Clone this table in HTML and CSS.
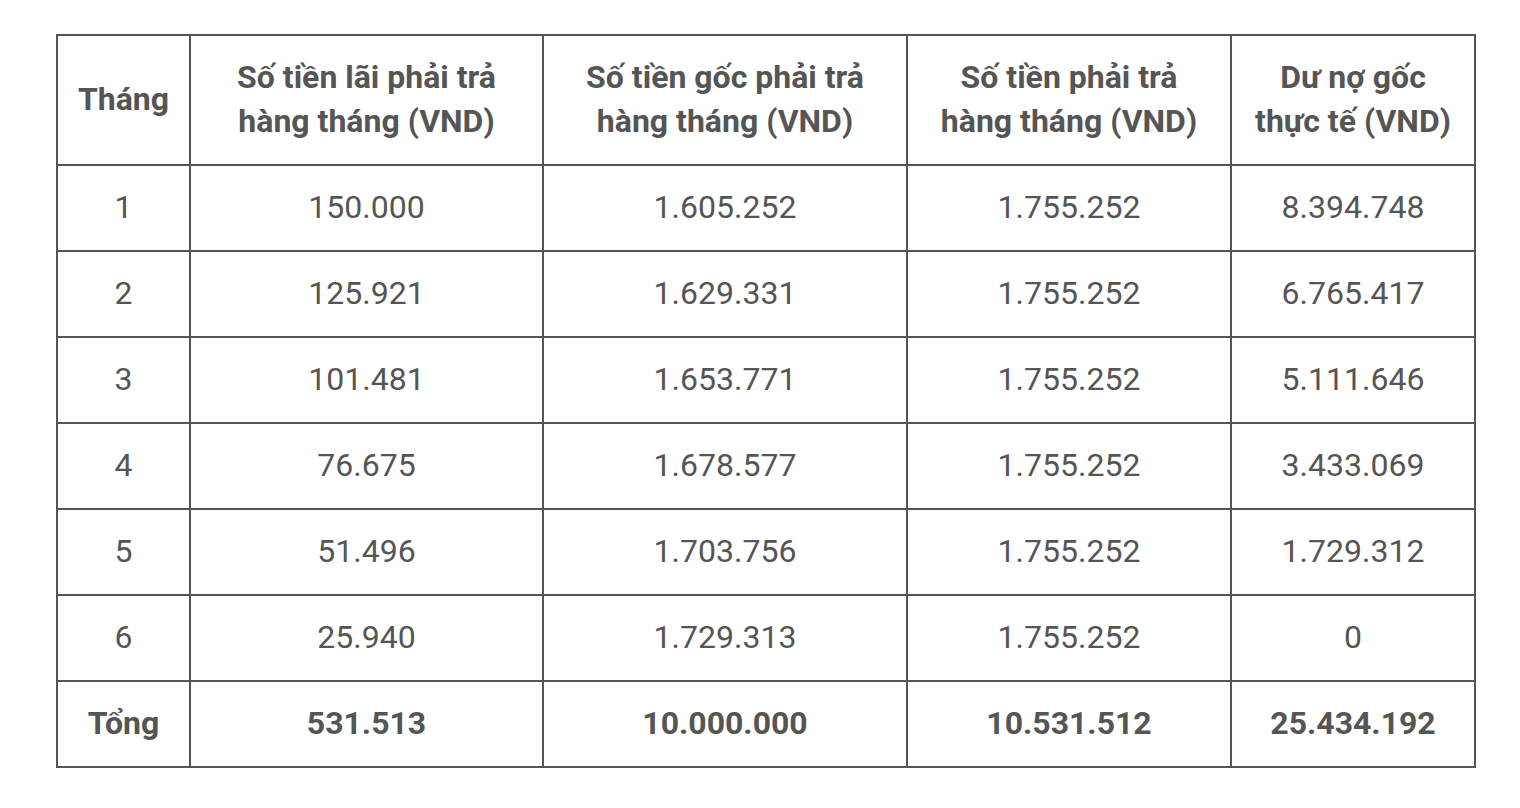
FILE: index.html
```html
<!DOCTYPE html>
<html lang="vi">
<head>
<meta charset="utf-8">
<link rel="stylesheet" href="styles.css">
</head>
<body>
<table class="loan">
  <colgroup>
    <col class="c1"><col class="c2"><col class="c3"><col class="c4"><col class="c5">
  </colgroup>
  <thead>
    <tr>
      <th>Tháng</th>
      <th>Số tiền lãi phải trả<br>hàng tháng (VND)</th>
      <th>Số tiền gốc phải trả<br>hàng tháng (VND)</th>
      <th>Số tiền phải trả<br>hàng tháng (VND)</th>
      <th>Dư nợ gốc<br>thực tế (VND)</th>
    </tr>
  </thead>
  <tbody>
    <tr><td>1</td><td>150.000</td><td>1.605.252</td><td>1.755.252</td><td>8.394.748</td></tr>
    <tr><td>2</td><td>125.921</td><td>1.629.331</td><td>1.755.252</td><td>6.765.417</td></tr>
    <tr><td>3</td><td>101.481</td><td>1.653.771</td><td>1.755.252</td><td>5.111.646</td></tr>
    <tr><td>4</td><td>76.675</td><td>1.678.577</td><td>1.755.252</td><td>3.433.069</td></tr>
    <tr><td>5</td><td>51.496</td><td>1.703.756</td><td>1.755.252</td><td>1.729.312</td></tr>
    <tr><td>6</td><td>25.940</td><td>1.729.313</td><td>1.755.252</td><td>0</td></tr>
    <tr class="total"><td>Tổng</td><td>531.513</td><td>10.000.000</td><td>10.531.512</td><td>25.434.192</td></tr>
  </tbody>
</table>
</body>
</html>
```

FILE: styles.css
```css
html, body {
  margin: 0;
  padding: 0;
  background: #ffffff;
}
body {
  padding: 34px 0 0 56px;
  font-family: Roboto, "Liberation Sans", sans-serif;
  color: #555555;
}
.loan {
  border-collapse: collapse;
  table-layout: fixed;
  width: 1420px;
  font-size: 32px;
}
.c1 { width: 133px; }
.c2 { width: 353px; }
.c3 { width: 364px; }
.c4 { width: 324px; }
.c5 { width: 244px; }
.loan th,
.loan td {
  border: 2px solid #555555;
  text-align: center;
  vertical-align: middle;
  padding: 0 0 2px;
}
.loan th {
  height: 126px;
  font-weight: 700;
  line-height: 44px;
}
.loan td {
  height: 82px;
  font-weight: 400;
}
.loan .total td {
  font-weight: 700;
}
```
